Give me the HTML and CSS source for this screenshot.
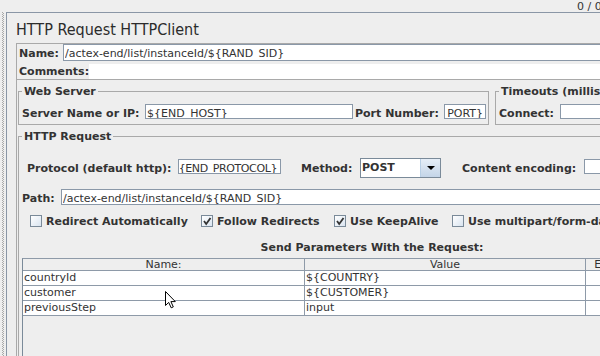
FILE: index.html
```html
<!DOCTYPE html>
<html lang="en">
<head>
<meta charset="utf-8">
<title>HTTP Request HTTPClient</title>
<link rel="stylesheet" href="styles.css">
</head>
<body>
<div class="topbar"><span class="counter">0 / 0</span></div>
<div class="split">
  <div class="grip"></div>
  <div class="main">
    <h1 class="title">HTTP Request HTTPClient</h1>
    <div class="form">
      <div class="namebox">
        <div class="row name-row">
          <span class="lbl w-name">Name:</span>
          <div class="field grow tall"><span class="val">/actex-end/list/instanceId/${RAND_SID}</span></div>
        </div>
        <div class="row comments-row">
          <span class="lbl w-comments">Comments:</span>
          <div class="area"></div>
        </div>
      </div>

      <div class="servers">
        <fieldset class="group web">
          <legend>Web Server</legend>
          <div class="row">
            <span class="lbl w-server">Server Name or IP:</span>
            <div class="field w-serverf"><span class="val">${END_HOST}</span></div>
            <span class="lbl w-port">Port Number:</span>
            <div class="field w-portf scroll"><span class="val">${END_PORT}</span></div>
          </div>
        </fieldset>
        <fieldset class="group timeouts">
          <legend>Timeouts (milliseconds)</legend>
          <div class="row">
            <span class="lbl w-connect">Connect:</span>
            <div class="field w-connectf"><span class="val"></span></div>
          </div>
        </fieldset>
      </div>

      <fieldset class="group http">
        <legend>HTTP Request</legend>
        <div class="row proto-row">
          <span class="lbl w-proto">Protocol (default http):</span>
          <div class="field w-protof scroll tight"><span class="val">${END_PROTOCOL}</span></div>
          <span class="lbl w-method">Method:</span>
          <div class="combo">
            <span class="combo-val">POST</span>
            <span class="combo-btn"><span class="arrow"></span></span>
          </div>
          <span class="lbl w-enc">Content encoding:</span>
          <div class="field w-encf"><span class="val"></span></div>
        </div>

        <div class="row path-row">
          <span class="lbl w-path">Path:</span>
          <div class="field grow path"><span class="val">/actex-end/list/instanceId/${RAND_SID}</span></div>
        </div>

        <div class="checks">
          <label class="chk w-c1"><span class="box"></span>Redirect Automatically</label>
          <label class="chk w-c2"><span class="box"><svg viewBox="0 0 10 10" width="10" height="10"><polyline points="2,5 4.2,8 8.5,2" fill="none" stroke="#333" stroke-width="1.8"/></svg></span>Follow Redirects</label>
          <label class="chk w-c3"><span class="box"><svg viewBox="0 0 10 10" width="10" height="10"><polyline points="2,5 4.2,8 8.5,2" fill="none" stroke="#333" stroke-width="1.8"/></svg></span>Use KeepAlive</label>
          <label class="chk"><span class="box"></span>Use multipart/form-data for POST</label>
        </div>

        <div class="params-title">Send Parameters With the Request:</div>

        <div class="pane">
          <div class="ptable">
            <div class="th">Name:</div>
            <div class="th">Value</div>
            <div class="th">Encode?</div>
            <div class="th">Include Equals?</div>

            <div class="td">countryId</div>
            <div class="td">${COUNTRY}</div>
            <div class="td"></div>
            <div class="td"></div>

            <div class="td">customer</div>
            <div class="td">${CUSTOMER}</div>
            <div class="td"></div>
            <div class="td"></div>

            <div class="td">previousStep</div>
            <div class="td">input</div>
            <div class="td"></div>
            <div class="td"></div>
          </div>
        </div>
      </fieldset>
    </div>
  </div>
</div>
<svg class="cursor" width="12" height="18" viewBox="0 0 12 18"><path d="M0.5 0.5 L0.5 14.5 L3.7 11.4 L6.2 16.8 L8.3 15.9 L5.9 10.6 L10.3 10.6 Z" fill="#fff" stroke="#000" stroke-width="1" stroke-linejoin="miter"/></svg>
</body>
</html>
```

FILE: styles.css
```css
* { box-sizing: border-box; }
html, body { margin: 0; padding: 0; }
body {
  width: 600px;
  height: 356px;
  overflow: hidden;
  position: relative;
  background: #eeeeee;
  font-family: "DejaVu Sans", "Noto Sans", sans-serif;
  font-size: 11px;
  color: #333333;
}

.topbar { height: 12px; padding-left: 577px; white-space: nowrap; }
.counter { display: inline-block; line-height: 6px; }

.split { display: flex; height: 344px; }
.grip {
  width: 6px;
  flex: none;
  background-image:
    repeating-linear-gradient(to bottom, #a8a8a8 0 1px, transparent 1px 2px),
    repeating-linear-gradient(to bottom, transparent 0 1px, #a8a8a8 1px 2px);
  background-size: 1px 100%, 1px 100%;
  background-position: 2px 0, 3px 0;
  background-repeat: no-repeat;
}
.main {
  flex: 1;
  min-width: 0;
  display: flex;
  flex-direction: column;
  border-left: 1px solid #8a96a6;
  border-top: 1px solid #8a96a6;
  padding-left: 9px;
}
.title {
  margin: 7px 0 4px;
  font-family: "DejaVu Sans Condensed", "DejaVu Sans", sans-serif;
  font-stretch: condensed;
  font-size: 16px;
  font-weight: normal;
  line-height: 19px;
  white-space: nowrap;
  color: #2b2b2b;
}
.form {
  flex: 1;
  width: 760px;
  border-left: 1px solid #a9a9a9;
  border-top: 1px solid #a9a9a9;
}

.row { display: flex; align-items: flex-start; }
.lbl {
  flex: none;
  font-weight: bold;
  line-height: 15px;
  padding-top: 2px;
  white-space: nowrap;
}
.field {
  flex: none;
  height: 15px;
  background: #ffffff;
  border: 1px solid #8a98a8;
  padding: 2px 1px 0;
  overflow: hidden;
}
.field.tall { height: 17px; }
.field.path { height: 16px; }
.field.grow { flex: 1; }
.val {
  display: block;
  height: 12px;
  line-height: 13px;
  overflow: hidden;
  white-space: nowrap;
}
.field.scroll .val { display: flex; justify-content: flex-end; padding-right: 1px; }
.field.tight .val { letter-spacing: -0.4px; padding-right: 2px; height: 11px; }

/* name / comments */
.namebox { border-bottom: 1px solid #a9a9a9; }
.name-row { height: 17px; padding-left: 2px; }
.comments-row { height: 15px; margin-top: 3px; padding-left: 2px; }
.comments-row .lbl { padding-top: 0; }
.area { flex: 1; height: 15px; background: #ffffff; }
.w-name { width: 44px; }
.w-comments { width: 70px; }

/* group boxes */
.group {
  margin: 0;
  min-width: 0;
  border: 1px solid #a9a9a9;
  padding: 6px 2px 3px 3px;
}
.group legend {
  font-weight: bold;
  line-height: 13px;
  padding: 0 2px;
  margin-left: 0;
  white-space: nowrap;
}
.servers { display: flex; align-items: flex-start; margin-top: 5px; margin-left: 1px; }
.web { flex: none; }
.timeouts { flex: none; width: 200px; margin-left: 6px; }
.w-server { width: 123px; }
.w-serverf { width: 208px; }
.w-port { width: 89px; margin-left: 2px; }
.w-portf { width: 42px; }
.w-connect { width: 61px; }
.w-connectf { width: 100px; }

.http {
  width: 708px;
  margin: 5px 0 0 1px;
  padding: 15px 3px 0 3px;
}

.proto-row { padding-left: 5px; height: 20px; }
.proto-row .lbl { padding-top: 3px; }
.proto-row .field { margin-top: 1px; }
.w-proto { width: 151px; }
.w-protof { width: 103px; }
.w-method { width: 59px; margin-left: 20px; }
.w-enc { width: 122px; margin-left: 21px; }
.w-encf { width: 60px; }

.combo {
  flex: none;
  display: flex;
  width: 81px;
  height: 20px;
  border: 1px solid #7a8a99;
  background: #ffffff;
}
.combo-val {
  flex: 1;
  font-weight: bold;
  line-height: 18px;
  padding-left: 1px;
  border-right: 1px solid #b8cfe5;
}
.combo-btn {
  width: 19px;
  display: flex;
  align-items: center;
  justify-content: center;
  background: linear-gradient(to bottom, #e6eef7, #c4d5e8);
}
.arrow {
  width: 0;
  height: 0;
  border-top: 4px solid #000000;
  border-left: 4.5px solid transparent;
  border-right: 4.5px solid transparent;
}

.path-row { margin-top: 11px; }
.w-path { width: 39px; }

.checks { display: flex; margin-top: 9px; padding-left: 8px; height: 13px; }
.chk { flex: none; display: flex; align-items: flex-start; font-weight: bold; line-height: 13px; white-space: nowrap; }
.w-c1 { width: 171px; }
.w-c2 { width: 133px; }
.w-c3 { width: 118px; }
.box {
  flex: none;
  width: 12px;
  height: 12px;
  margin-right: 4px;
  border: 1px solid #7a8a99;
  background: linear-gradient(135deg, #ffffff, #d9e4f0);
  display: flex;
  align-items: center;
  justify-content: center;
}
.box svg { display: block; }

.params-title {
  margin-top: 13px;
  width: 700px;
  text-align: center;
  font-weight: bold;
  line-height: 13px;
  white-space: nowrap;
}

.pane {
  margin-top: 4px;
  width: 700px;
  height: 130px;
  border-left: 1px solid #7a8a99;
  border-top: 1px solid #8e9aa8;
}
.ptable { display: grid; grid-template-columns: 282px 281px 64px 72px; }
.th {
  height: 12px;
  line-height: 11px;
  text-align: center;
  white-space: nowrap;
  overflow: hidden;
  border-right: 1px solid #8e9aa8;
  border-bottom: 1px solid #8e9aa8;
}
.td {
  height: 15px;
  line-height: 14px;
  padding-left: 1px;
  background: #ffffff;
  white-space: nowrap;
  overflow: hidden;
  border-right: 1px solid #8e9aa8;
  border-bottom: 1px solid #8e9aa8;
}

.cursor { position: absolute; left: 165px; top: 291px; }
```
